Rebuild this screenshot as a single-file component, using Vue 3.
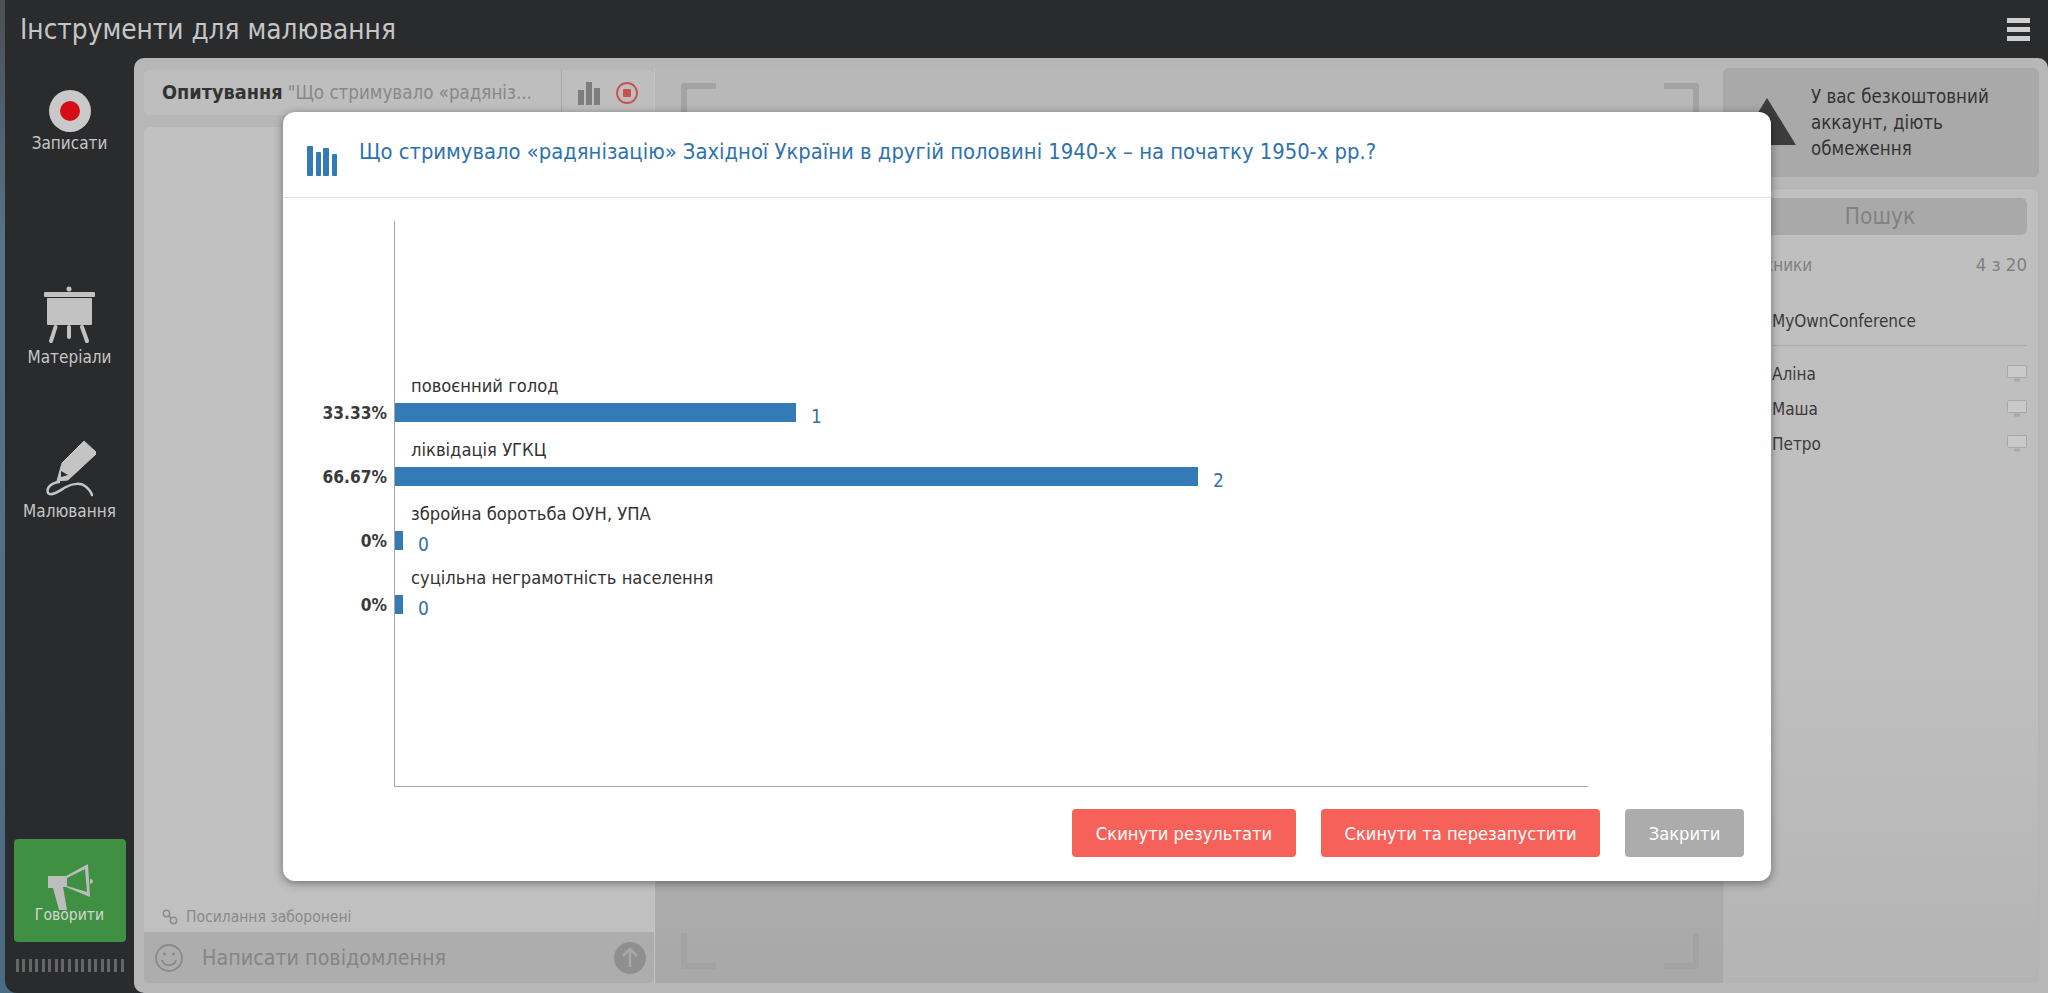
<script setup>
const rows = [
  { label: 'повоєнний голод', pct: '33.33%', value: 1, width: 401 },
  { label: 'ліквідація УГКЦ', pct: '66.67%', value: 2, width: 803 },
  { label: 'збройна боротьба ОУН, УПА', pct: '0%', value: 0, width: 8 },
  { label: 'суцільна неграмотність населення', pct: '0%', value: 0, width: 8 },
]
const users = ['Аліна', 'Маша', 'Петро']
const ticks = Array.from({ length: 17 })
</script>

<template>
  <div class="app">
    <header class="topbar">
      <div class="title">Інструменти для малювання</div>
      <div class="burger"><i></i><i></i><i></i></div>
    </header>
    <div class="body">
      <aside class="sidebar">
        <div class="tool rec">
          <div class="rec-btn"><span></span></div>
          <div class="tool-label">Записати</div>
        </div>
        <div class="tool mat">
          <svg width="54" height="57" viewBox="14 6 54 57" fill="#c2c2c2">
            <circle cx="40" cy="9" r="2.500" />
            <rect x="15" y="12" width="51" height="5" rx="1" />
            <rect x="18" y="18" width="45" height="27" rx="1" />
            <path d="M26.500 47L22 61M40 47V57M53 47l5 14" stroke="#c2c2c2" stroke-width="4" stroke-linecap="round" />
          </svg>
          <div class="tool-label">Матеріали</div>
        </div>
        <div class="tool draw">
          <svg width="52" height="58" viewBox="13 9 52 58" fill="none">
            <path d="M53 11L66 23 37 50 26 51 31 33Z" fill="#c4c4c4" stroke="#c4c4c4" stroke-width="1" stroke-linejoin="round" />
            <path d="M30 41l7 4-7 2z" fill="#2a2b2d" />
            <path d="M28 52C20 53 15 58 17 63C20 67 28 61 35 57C42 53 50 53 54 56C58 59 60 62 61 65" stroke="#c4c4c4" stroke-width="2.500" stroke-linecap="round" />
          </svg>
          <div class="tool-label">Малювання</div>
        </div>
        <div class="spacer"></div>
        <div class="speak">
          <svg width="52" height="50" viewBox="14 7 52 50" fill="#bdbdbd">
            <path d="M18 21H36L58 9 60 42 36 32H33L37 55H29L23 33H18Z" />
            <path d="M37 23L55 14 57 37 37 31Z" fill="#409043" />
            <path d="M60 24C64 24 64 28 60 29Z" />
          </svg>
          <div class="speak-label">Говорити</div>
        </div>
        <div class="meter"><i v-for="(t, n) in ticks" :key="n"></i></div>
      </aside>

      <main class="main">
        <section class="chat">
          <div class="poll-bar">
            <div class="poll-text"><b>Опитування</b> <span>"Що стримувало «радяніз...</span></div>
            <div class="poll-actions">
              <svg width="24" height="24" viewBox="0 0 24 24" fill="#7e7e7e">
                <rect x="1" y="9" width="6" height="15" /><rect x="9" y="1" width="6" height="23" /><rect x="17" y="7" width="6" height="17" />
              </svg>
              <svg width="24" height="24" viewBox="0 0 24 24">
                <circle cx="12" cy="12" r="10" fill="none" stroke="#c8514f" stroke-width="1.800" />
                <rect x="8" y="8" width="8" height="8" rx="1" fill="#c8514f" />
              </svg>
            </div>
          </div>
          <div class="chat-log">
            <div class="links">
              <svg width="16" height="16" viewBox="0 0 16 16" fill="none" stroke="#8c8c8c" stroke-width="1.500">
                <circle cx="4.500" cy="4.500" r="3.200" /><circle cx="11.500" cy="11.500" r="3.200" /><path d="M7 7l2 2" />
              </svg>
              Посилання заборонені
            </div>
          </div>
          <div class="chat-input">
            <svg width="30" height="30" viewBox="0 0 30 30" fill="none" stroke="#8a8a8a" stroke-width="1.800">
              <circle cx="15" cy="15" r="13" /><path d="M8 17c2 7 12 7 14 0" />
              <circle cx="10.500" cy="11" r="1.500" fill="#8a8a8a" stroke="none" /><circle cx="19.500" cy="11" r="1.500" fill="#8a8a8a" stroke="none" />
            </svg>
            <span class="placeholder">Написати повідомлення</span>
            <svg class="send" width="32" height="32" viewBox="0 0 32 32">
              <circle cx="16" cy="16" r="16" fill="#8f8f8f" />
              <path d="M16 7v18M9 14l7-7 7 7" fill="none" stroke="#a8a8a8" stroke-width="2.500" />
            </svg>
          </div>
        </section>

        <section class="board">
          <div class="corners top"><i class="tl"></i><i class="tr"></i></div>
          <div class="corners"><i class="bl"></i><i class="br"></i></div>
        </section>

        <aside class="right">
          <div class="notice">
            <div class="triangle"></div>
            <p>У вас безкоштовний аккаунт, діють обмеження</p>
          </div>
          <div class="people">
            <div class="search">Пошук</div>
            <div class="count-row"><span class="count-name">Учасники</span><span>4 з 20</span></div>
            <div class="owner">MyOwnConference</div>
            <div class="user" v-for="u in users" :key="u">
              <span>{{ u }}</span>
              <svg width="20" height="18" viewBox="0 0 20 18" fill="none">
                <rect x="0.500" y="0.500" width="19" height="12" rx="1" fill="#c9c9c9" stroke="#a8a8a8" />
                <path d="M7 15h6" stroke="#a8a8a8" stroke-width="3" />
              </svg>
            </div>
          </div>
        </aside>
      </main>
    </div>

    <div class="modal">
      <div class="modal-head">
        <svg width="30" height="30" viewBox="0 0 30 30" fill="#337ab7">
          <rect x="0" y="0" width="6" height="30" rx="1" /><rect x="9" y="6" width="5" height="24" rx="1" />
          <rect x="16" y="2" width="6" height="28" rx="1" /><rect x="25" y="8" width="5" height="22" rx="1" />
        </svg>
        <h2>Що стримувало «радянізацію» Західної України в другій половині 1940-х – на початку 1950-х рр.?</h2>
      </div>
      <div class="chart-wrap">
        <div class="chart">
          <div class="row" v-for="r in rows" :key="r.label">
            <div class="row-label">{{ r.label }}</div>
            <div class="row-bar">
              <span class="pct">{{ r.pct }}</span>
              <span class="bar" :style="{ width: r.width + 'px' }"></span>
              <span class="val">{{ r.value }}</span>
            </div>
          </div>
        </div>
      </div>
      <div class="modal-foot">
        <button class="btn red b1">Скинути результати</button>
        <button class="btn red b2">Скинути та перезапустити</button>
        <button class="btn grey b3">Закрити</button>
      </div>
    </div>
  </div>
</template>

<style>
html, body { margin: 0; overflow: hidden; }
body { background: linear-gradient(#4c4f53, #56748a 25%, #4b6b82); }
</style>

<style scoped>
.app {
  position: relative;
  width: 2043px;
  height: 993px;
  margin-left: 5px;
  display: flex;
  flex-direction: column;
  background: #2a2b2d;
  border-radius: 0 0 0 12px;
  font-family: "DejaVu Sans", sans-serif;
  font-stretch: condensed;
  overflow: hidden;
}
.topbar {
  height: 58px;
  flex: none;
  display: flex;
  align-items: center;
  justify-content: space-between;
  padding: 0 18px 0 15px;
}
.title { color: #c6c6c6; font-size: 27.700px; }
.burger { display: flex; flex-direction: column; gap: 4px; }
.burger i { display: block; width: 23px; height: 5px; background: #cfcfcf; }
.body { flex: 1; display: flex; min-height: 0; }
.sidebar {
  width: 129px;
  flex: none;
  display: flex;
  flex-direction: column;
  align-items: center;
}
.tool { display: flex; flex-direction: column; align-items: center; }
.tool-label { color: #c6c6c6; font-size: 17px; line-height: 20px; }
.rec { margin-top: 32px; gap: 1px; }
.rec-btn {
  width: 42px; height: 42px; border-radius: 50%;
  background: #c9c9c9;
  display: flex; align-items: center; justify-content: center;
}
.rec-btn span { width: 20px; height: 20px; border-radius: 50%; background: #d60d14; }
.mat { margin-top: 133px; gap: 4px; }
.draw { margin-top: 72px; gap: 4px; }
.spacer { flex: 1; }
.speak {
  width: 112px; height: 103px;
  background: #409043;
  border-radius: 4px;
  display: flex; flex-direction: column; align-items: center;
  padding-top: 23px;
  box-sizing: border-box;
}
.speak-label { color: #d6d6d6; font-size: 15.600px; margin-top: -7px; line-height: 20px; }
.meter { display: flex; justify-content: space-between; width: 108px; height: 13px; margin: 17px 0 21px; }
.meter i { width: 3px; background: #666; }

.main {
  flex: 1;
  display: flex;
  background: #b7b7b7;
  border-radius: 10px 10px 0 10px;
  padding: 10px;
  min-width: 0;
}
.chat { width: 510px; flex: none; display: flex; flex-direction: column; border-right: 1px solid #c4c4c4; }
.poll-bar {
  height: 45px; margin-top: 2px;
  background: #bebebe;
  border-radius: 5px;
  display: flex;
  align-items: center;
  color: #444;
  font-size: 18.600px;
}
.poll-text { flex: 1; padding-left: 18px; white-space: nowrap; color: #888; }
.poll-text b { color: #333; font-size: 19.700px; }
.poll-actions {
  width: 93px; height: 100%;
  border-left: 1px solid #aaa;
  display: flex; align-items: center; justify-content: center; gap: 14px;
  box-sizing: border-box;
}
.chat-log {
  flex: 1;
  margin-top: 12px;
  background: #c0c0c0;
  border-radius: 5px 5px 0 0;
  display: flex;
  align-items: flex-end;
}
.links { display: flex; align-items: center; gap: 8px; color: #8a8a8a; font-size: 15.500px; padding: 0 0 6px 18px; }
.chat-input {
  height: 51px;
  background: #adadad;
  border-radius: 0 0 5px 5px;
  display: flex;
  align-items: center;
  padding: 0 8px 0 10px;
  color: #858585;
  font-size: 21.300px;
}
.placeholder { flex: 1; margin-left: 18px; }
.board {
  flex: 1;
  display: flex; flex-direction: column; justify-content: space-between;
  padding: 15px 24px 14px 26px;
  background: linear-gradient(#b8b8b8 60%, #a8a8a8);
}
.corners { display: flex; justify-content: space-between; }
.corners i { display: block; width: 29px; height: 30px; border: 6px solid #a3a3a3; }
.tl { border-right: 0 !important; border-bottom: 0 !important; border-top-left-radius: 4px; }
.tr { border-left: 0 !important; border-bottom: 0 !important; border-top-right-radius: 4px; }
.bl { border-right: 0 !important; border-top: 0 !important; border-bottom-left-radius: 4px; }
.br { border-left: 0 !important; border-top: 0 !important; border-bottom-right-radius: 4px; }
.right { width: 316px; flex: none; display: flex; flex-direction: column; gap: 11px; margin-right: -1px; }
.notice {
  height: 109px;
  background: #a9a9a9;
  border-radius: 6px;
  display: flex;
  align-items: center;
  color: #333;
  font-size: 18.600px;
  line-height: 26px;
  position: relative;
}
.notice p { margin: 0 0 0 88px; width: 215px; }
.triangle {
  position: absolute;
  left: 15px; top: 30px;
  width: 0; height: 0;
  border-left: 29px solid transparent;
  border-right: 29px solid transparent;
  border-bottom: 47px solid #3c3c3c;
}
.people {
  flex: 1;
  background: linear-gradient(#bfbfbf 60%, #b4b4b4);
  border: 1px solid #b3b3b3;
  border-radius: 6px;
  padding: 9px 11px 0 0;
  box-sizing: border-box;
  color: #3a3a3a;
}
.search {
  height: 37px;
  line-height: 37px;
  text-align: center;
  background: #a9a9a9;
  border-radius: 6px;
  color: #818181;
  font-size: 22.500px;
  margin-left: 9px;
}
.count-row { display: flex; justify-content: space-between; margin-top: 19px; color: #818181; font-size: 18.500px; padding-left: 13px; line-height: 22px; }
.count-name { font-size: 17px; }
.owner { margin: 35px 0 10px 48px; font-size: 17px; padding-bottom: 14px; border-bottom: 1px solid #adadad; line-height: 20px; }
.user { display: flex; justify-content: space-between; align-items: center; margin-left: 48px; font-size: 17px; height: 35px; }

.modal {
  position: absolute;
  left: 278px; top: 112px;
  width: 1488px; height: 769px;
  background: #fff;
  border-radius: 12px;
  box-shadow: 0 2px 10px rgba(0,0,0,.42);
  display: flex;
  flex-direction: column;
}
.modal-head {
  height: 85px;
  flex: none;
  display: flex;
  align-items: center;
  border-bottom: 1px solid #e4e4e4;
  padding-left: 24px;
}
.modal-head svg { margin-top: 12px; }
.modal-head h2 { margin: 0 0 6px 22px; font-weight: 400; font-size: 21.800px; color: #2e72ad; white-space: nowrap; }
.chart-wrap { flex: 1; padding: 23px 0 0 111px; }
.chart {
  width: 1194px; height: 566px;
  border-left: 1px solid #a6a6a6;
  border-bottom: 1px solid #a6a6a6;
  box-sizing: border-box;
  padding-top: 153px;
}
.row { height: 64px; }
.row-label { padding-left: 16px; font-size: 18.200px; color: #333; line-height: 24px; height: 29px; }
.row-bar { position: relative; display: flex; align-items: center; height: 19px; }
.pct { position: absolute; right: calc(100% + 8px); font-size: 17.200px; font-weight: 700; color: #3a3a3a; white-space: nowrap; }
.bar { display: block; height: 19px; background: #337ab7; flex: none; }
.val { margin-left: 15px; font-size: 19px; color: #2e72ad; position: relative; top: 3px; }
.modal-foot { height: 94px; flex: none; display: flex; justify-content: flex-end; align-items: flex-start; padding: 22px 27px 0 0; gap: 25px; box-sizing: border-box; }
.btn {
  height: 48px; border: 0; border-radius: 4px;
  color: #fff; font-family: inherit; font-stretch: condensed; font-size: 18.200px;
  padding: 0;
}
.red { background: #f6625a; }
.grey { background: #acacac; }
.b1 { width: 224px; }
.b2 { width: 279px; }
.b3 { width: 119px; }
</style>
